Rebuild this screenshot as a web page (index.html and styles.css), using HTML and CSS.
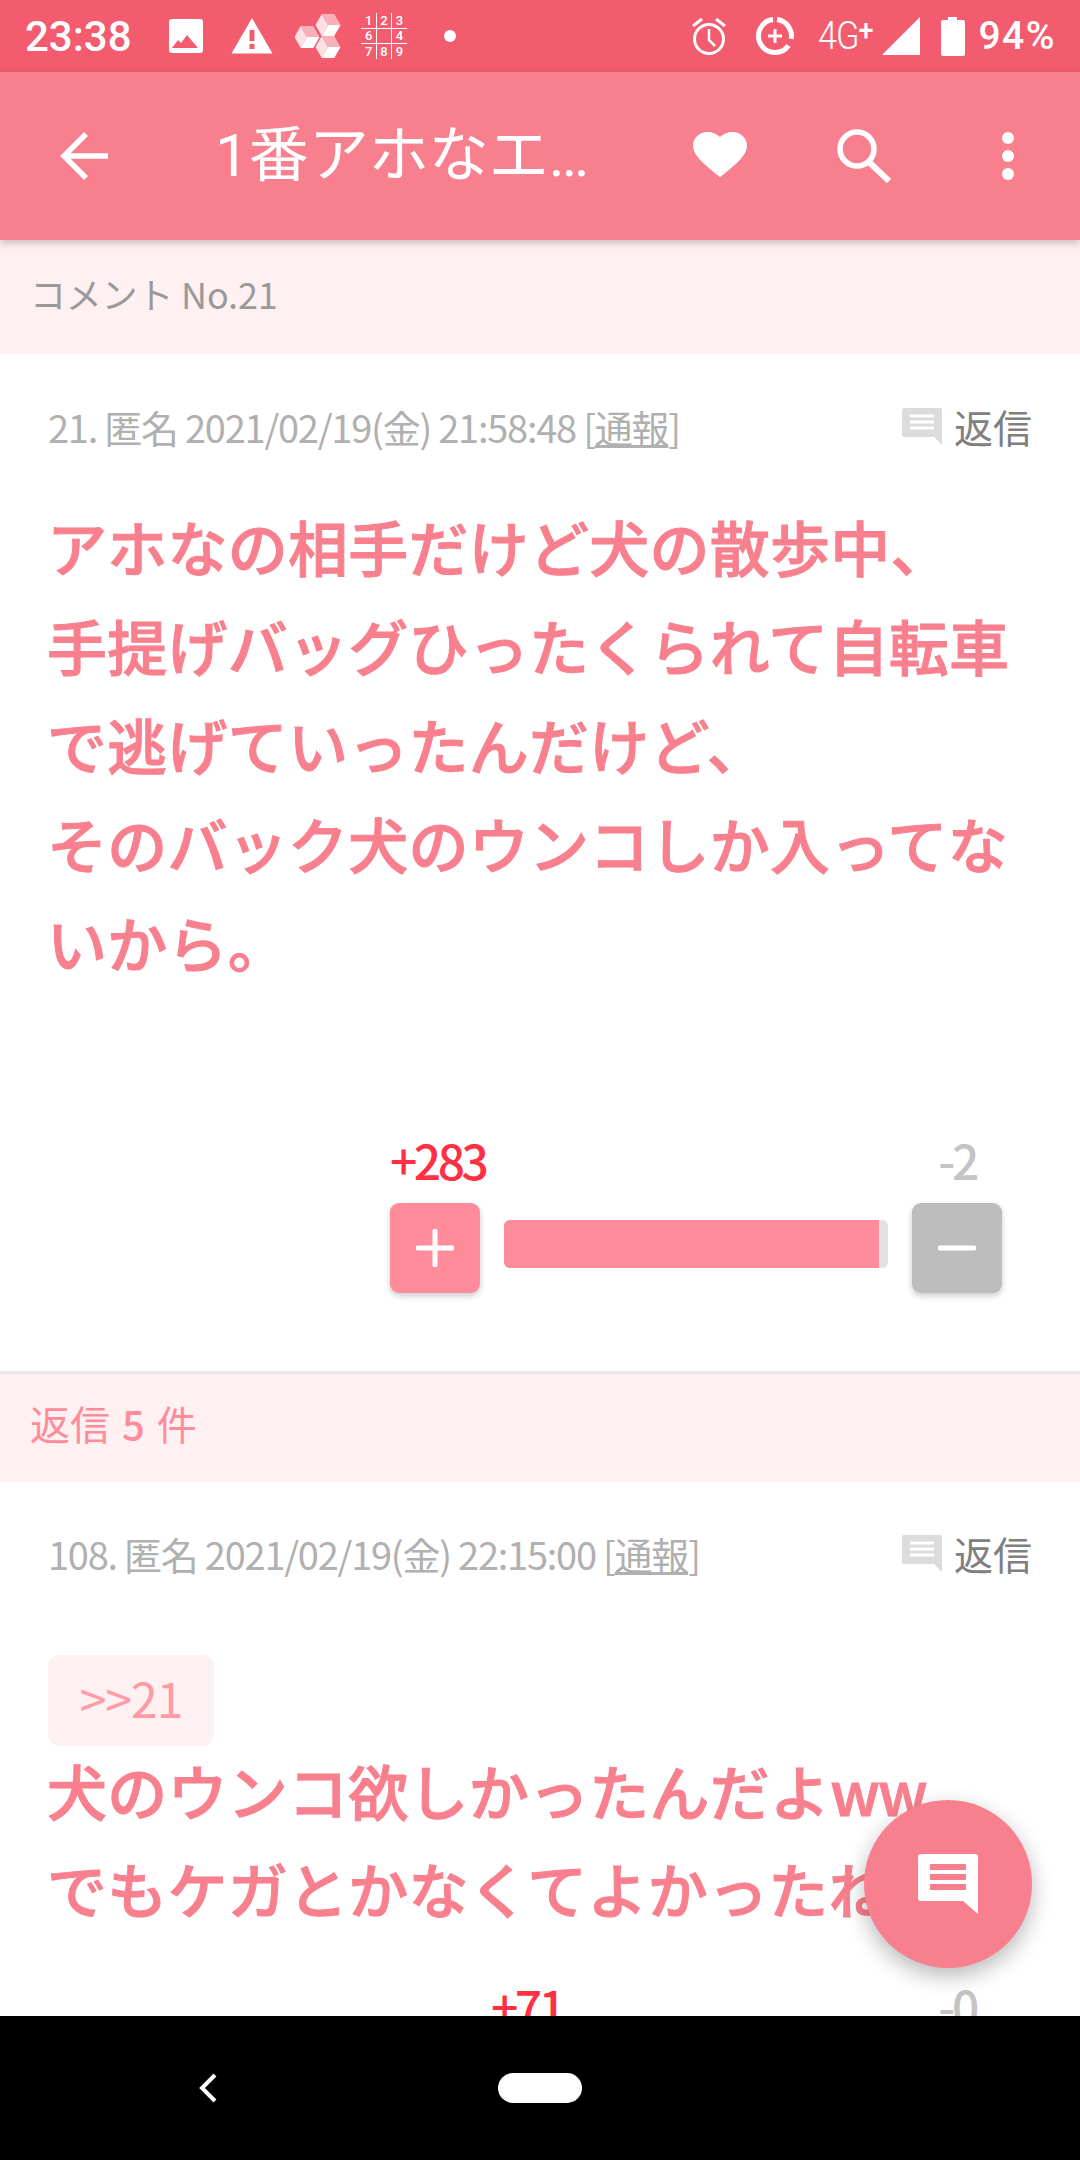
FILE: index.html
```html
<!DOCTYPE html>
<html lang="ja">
<head>
<meta charset="utf-8">
<title>コメント No.21</title>
<link rel="stylesheet" href="styles.css">
</head>
<body>
<div class="phone">
  <header class="status">
    <span class="clock">23:38</span>
    <div class="status-left">
      <svg class="si" width="36" height="36" viewBox="0 0 36 36"><rect x="1" y="1" width="34" height="34" rx="3" fill="#fff"/><path d="M4 30l6-8 3 3 6-8 11 13z" fill="#f25c6e"/></svg>
      <svg class="si warn" width="42" height="36" viewBox="0 0 42 36"><path d="M21 0l20.500 35.500H.500z" fill="#fff"/><rect x="18.500" y="12" width="5" height="11" fill="#f25c6e"/><rect x="18.500" y="26" width="5" height="5" fill="#f25c6e"/></svg>
      <svg class="si cubes" width="46" height="46" viewBox="0 0 46 46">
        <g transform="translate(33 12)"><path d="M0 0L-6.250 11-12.500 0-6.250-11z" fill="#fde0e4"/><path d="M0 0L-6.250-11H6.250L12.500 0z" fill="#f9b0b9"/><path d="M0 0L12.500 0 6.250 11H-6.250z" fill="#fff"/></g>
        <g transform="translate(12 24)"><path d="M0 0L-6.250 11-12.500 0-6.250-11z" fill="#fde0e4"/><path d="M0 0L-6.250-11H6.250L12.500 0z" fill="#f9b0b9"/><path d="M0 0L12.500 0 6.250 11H-6.250z" fill="#fff"/></g>
        <g transform="translate(33 34)"><path d="M0 0L-6.250 11-12.500 0-6.250-11z" fill="#fde0e4"/><path d="M0 0L-6.250-11H6.250L12.500 0z" fill="#f9b0b9"/><path d="M0 0L12.500 0 6.250 11H-6.250z" fill="#fff"/></g>
      </svg>
      <div class="sudoku">
        <span>1</span><span>2</span><span>3</span>
        <span>6</span><span></span><span>4</span>
        <span>7</span><span>8</span><span>9</span>
      </div>
      <span class="dot"></span>
    </div>
    <div class="status-right">
      <svg width="38" height="38" viewBox="0 0 38 38" fill="none" stroke="#fff"><circle cx="19" cy="22" r="14.500" stroke-width="3"/><path d="M19 12v11l6 6" stroke-width="2.500"/><path d="M3 9l9-7M35 9l-9-7" stroke-width="3"/></svg>
      <svg class="saver" width="38" height="38" viewBox="0 0 38 38" fill="none" stroke="#fff"><path d="M21 2.600A16.500 16.500 0 0 1 35.200 21.900M32.500 28.500A16.500 16.500 0 1 1 17 2.600" stroke-width="5"/><path d="M19 12v14M12 19h14" stroke-width="3"/></svg>
      <span class="net">4G<sup class="plus">+</sup></span>
      <svg class="signal" width="38" height="38" viewBox="0 0 38 38"><path d="M38 0v38H0z" fill="#fff"/></svg>
      <svg class="batt" width="24" height="39" viewBox="0 0 24 39"><path d="M7 0h9v3h6a2 2 0 0 1 2 2v32a2 2 0 0 1-2 2H2a2 2 0 0 1-2-2V5a2 2 0 0 1 2-2h5z" fill="#fff"/></svg>
      <span class="pct">94%</span>
    </div>
  </header>

  <nav class="appbar">
    <svg class="back" width="48" height="48" viewBox="0 0 48 48" fill="none" stroke="#fff" stroke-width="5.500"><path d="M26 2L4 24l22 22M4 24h44"/></svg>
    <h1 class="title">1番アホなエ…</h1>
    <svg class="heart" width="54" height="50" viewBox="0 0 24 22"><path d="M12 21.350l-1.450-1.320C5.400 15.360 2 12.280 2 8.500 2 5.420 4.420 3 7.500 3c1.740 0 3.410.81 4.500 2.090C13.090 3.810 14.760 3 16.500 3 19.580 3 22 5.420 22 8.500c0 3.780-3.400 6.860-8.550 11.540L12 21.350z" transform="translate(-2.400 -3) scale(1.200 1.100)" fill="#fff"/></svg>
    <svg class="search" width="54" height="54" viewBox="0 0 54 54" fill="none" stroke="#fff"><circle cx="20" cy="20" r="17" stroke-width="5.500"/><path d="M33 34l19 18" stroke-width="6"/></svg>
    <div class="more"><i></i><i></i><i></i></div>
  </nav>

  <main class="scroll">
    <div class="band">コメント No.21</div>
    <article class="comment first">
      <div class="meta">
        <p class="info">21. 匿名 2021/02/19(金) 21:58:48 [<u>通報</u>]</p>
        <div class="reply">
          <svg width="40" height="37" viewBox="0 0 40 37"><path d="M2 0h36a2 2 0 0 1 2 2v35l-8-8H2a2 2 0 0 1-2-2V2a2 2 0 0 1 2-2z" fill="#dcdcdc"/><path d="M8 8h24M8 14h24M8 20h24" stroke="#fff" stroke-width="3"/></svg>
          <span>返信</span>
        </div>
      </div>
      <p class="body">アホなの相手だけど犬の散歩中、<br>手提げバッグひったくられて自転車<br>で逃げていったんだけど、<br>そのバック犬のウンコしか入ってな<br>いから。</p>
      <div class="vote">
        <div class="vote-num plus-num">+283</div>
        <div class="vote-num minus-num">-2</div>
        <button class="vbtn good"><svg width="38" height="38" viewBox="0 0 38 38" stroke="#fff" stroke-width="5" stroke-linecap="round"><path d="M19 2v34M2 19h34"/></svg></button>
        <div class="bar"><div class="fill fill-a"></div></div>
        <button class="vbtn bad"><svg width="38" height="38" viewBox="0 0 38 38" stroke="#fff" stroke-width="5" stroke-linecap="round"><path d="M2 19h34"/></svg></button>
      </div>
    </article>
    <div class="band replies">返信 <b>5</b> 件</div>
    <article class="comment second">
      <div class="meta">
        <p class="info">108. 匿名 2021/02/19(金) 22:15:00 [<u>通報</u>]</p>
        <div class="reply">
          <svg width="40" height="37" viewBox="0 0 40 37"><path d="M2 0h36a2 2 0 0 1 2 2v35l-8-8H2a2 2 0 0 1-2-2V2a2 2 0 0 1 2-2z" fill="#dcdcdc"/><path d="M8 8h24M8 14h24M8 20h24" stroke="#fff" stroke-width="3"/></svg>
          <span>返信</span>
        </div>
      </div>
      <span class="anchor">&gt;&gt;21</span>
      <p class="body tight">犬のウンコ欲しかったんだよ<span class="ww">ww</span><br>でもケガとかなくてよかったね</p>
      <div class="vote small">
        <div class="vote-num plus-num">+71</div>
        <div class="vote-num minus-num">-0</div>
      </div>
    </article>
  </main>

  <button class="fab"><svg width="60" height="60" viewBox="0 0 60 60"><path d="M3 0h54a3 3 0 0 1 3 3v57L45 47H3a3 3 0 0 1-3-3V3a3 3 0 0 1 3-3z" fill="#fff"/><path d="M12 13h36M12 23h36M12 33h36" stroke="#f8808e" stroke-width="6"/></svg></button>

  <footer class="navbar">
    <svg class="navback" width="22" height="30" viewBox="0 0 22 30" fill="none" stroke="#fff" stroke-width="4"><path d="M18 2L5 15l13 13"/></svg>
    <span class="pill"></span>
  </footer>
</div>
</body>
</html>
```
FILE: styles.css
```css
* { box-sizing: border-box; }
html, body { margin: 0; padding: 0; background: #fff; }
p, h1 { margin: 0; font-weight: inherit; }
.phone {
  position: relative;
  width: 1080px;
  height: 2160px;
  overflow: hidden;
  display: flex;
  flex-direction: column;
  font-family: "Noto Sans CJK JP", sans-serif;
}
.status {
  height: 72px;
  flex: none;
  background: #f25c6e;
  color: #fff;
  display: flex;
  align-items: center;
  padding: 0 24px 0 25px;
  font-family: Roboto, sans-serif;
}
.clock { font-size: 42px; font-weight: 500; width: 143px; }
.status-left { display: flex; align-items: center; }
.si { display: block; flex: none; }
.warn { margin-left: 27px; }
.cubes { margin-left: 22px; }
.sudoku {
  margin-left: 20px;
  width: 46px;
  height: 46px;
  display: grid;
  grid-template-columns: repeat(3, 1fr);
  grid-template-rows: repeat(3, 1fr);
  font-size: 13px;
  line-height: 15px;
  font-weight: 500;
  text-align: center;
  background:
    linear-gradient(#fff, #fff) 15px 0 / 1px 100% no-repeat,
    linear-gradient(#fff, #fff) 30px 0 / 1px 100% no-repeat,
    linear-gradient(#fff, #fff) 0 15px / 100% 1px no-repeat,
    linear-gradient(#fff, #fff) 0 30px / 100% 1px no-repeat;
}
.dot { width: 12px; height: 12px; border-radius: 50%; background: #fff; margin-left: 37px; }
.status-right { margin-left: auto; display: flex; align-items: center; }
.saver { margin-left: 28px; }
.net { font-size: 38px; font-weight: 300; margin-left: 24px; width: 64px; letter-spacing: -1px; line-height: 38px; white-space: nowrap; transform: scaleX(.9); transform-origin: left; }
.plus { font-size: 30px; line-height: 0; vertical-align: 9px; font-weight: 500; }
.batt { margin-left: 21px; }
.pct { font-size: 39px; font-weight: 500; margin-left: 13px; letter-spacing: 1.500px; }
.appbar {
  position: relative;
  z-index: 2;
  height: 168px;
  flex: none;
  background: #f8808e;
  box-shadow: 0 3px 8px rgba(0,0,0,.22);
  display: flex;
  align-items: center;
  color: #fff;
  padding-left: 60px;
}
.back { flex: none; }
.title { font-family: Roboto, "Noto Sans CJK JP", sans-serif; font-size: 60px; font-weight: 400; margin-left: 107px; width: 478px; white-space: nowrap; line-height: 84px; }
.heart { flex: none; }
.search { flex: none; margin-left: 90px; }
.more { margin-left: 111px; display: flex; flex-direction: column; gap: 6px; }
.more i { display: block; width: 12px; height: 12px; border-radius: 50%; background: #fff; }
.scroll { flex: 1; min-height: 0; overflow: hidden; background: #fff; }
.band { height: 114px; background: #fff0f1; color: #9a9a9a; font-size: 36px; line-height: 106px; padding-left: 30px; letter-spacing: -.2px; }
.replies { height: 108px; line-height: 98px; color: #ff8c9a; font-size: 40px; letter-spacing: 0; word-spacing: 3px; }
.replies b { font-weight: 500; }
.comment { padding: 0 48px; }
.first { height: 1020px; border-bottom: 3px solid #e8e8e8; padding-top: 49px; }
.meta { display: flex; justify-content: space-between; align-items: center; height: 46px; }
.info { color: #b0b0b0; font-size: 38px; letter-spacing: -1.250px; white-space: nowrap; }
.reply { display: flex; align-items: center; gap: 12px; color: #808080; font-size: 39px; line-height: 46px; }
.reply svg { flex: none; }
.body { color: #f8808e; font-size: 60px; font-weight: 500; -webkit-text-stroke: 1px #f8808e; line-height: 99px; margin: 47px 0 0 -1px; white-space: nowrap; letter-spacing: .25px; }
.ww { letter-spacing: -2px; }
.vote {
  display: grid;
  grid-template-columns: 90px 384px 90px;
  column-gap: 24px;
  justify-content: end;
  margin-top: 138px;
  padding-right: 30px;
  row-gap: 14px;
}
.vote-num { font-size: 48px; font-weight: 500; line-height: 60px; text-align: center; letter-spacing: -3.500px; white-space: nowrap; }
.plus-num { color: #ff3044; grid-column: 1; }
.minus-num { color: #c4c4c4; grid-column: 3; }
.vbtn { width: 90px; height: 90px; border: 0; padding: 0; border-radius: 9px; display: flex; align-items: center; justify-content: center; box-shadow: 0 3px 6px rgba(0,0,0,.2); }
.good { background: #ff8c9a; }
.bad { background: #bdbdbd; }
.bar { height: 48px; margin-top: 17px; border-radius: 6px; background: #e2e2e2; overflow: hidden; }
.fill { height: 100%; background: #ff8c9a; }
.fill-a { width: 97.600%; }
.second { padding-top: 48px; }
.anchor { display: block; width: 166px; height: 91px; margin-top: 79px; border-radius: 12px; background: #fff0f1; color: #ff9aa6; font-size: 48px; line-height: 84px; text-align: center; letter-spacing: -1px; }
.tight { margin-top: -5px; line-height: 98px; }
.small { margin-top: 38px; grid-template-columns: 66px 367px 66px; padding-right: 42px; column-gap: 0; }
.fab {
  position: absolute;
  left: 864px;
  top: 1800px;
  width: 168px;
  height: 168px;
  border: 0;
  padding: 0;
  border-radius: 50%;
  background: #f8808e;
  box-shadow: 0 8px 22px rgba(0,0,0,.28);
  display: flex;
  align-items: center;
  justify-content: center;
}
.navbar { height: 144px; flex: none; background: #000; position: relative; z-index: 3; display: flex; align-items: center; padding-left: 197px; }
.navback { flex: none; }
.pill { width: 84px; height: 30px; border-radius: 15px; background: #fff; margin-left: 279px; }
```
